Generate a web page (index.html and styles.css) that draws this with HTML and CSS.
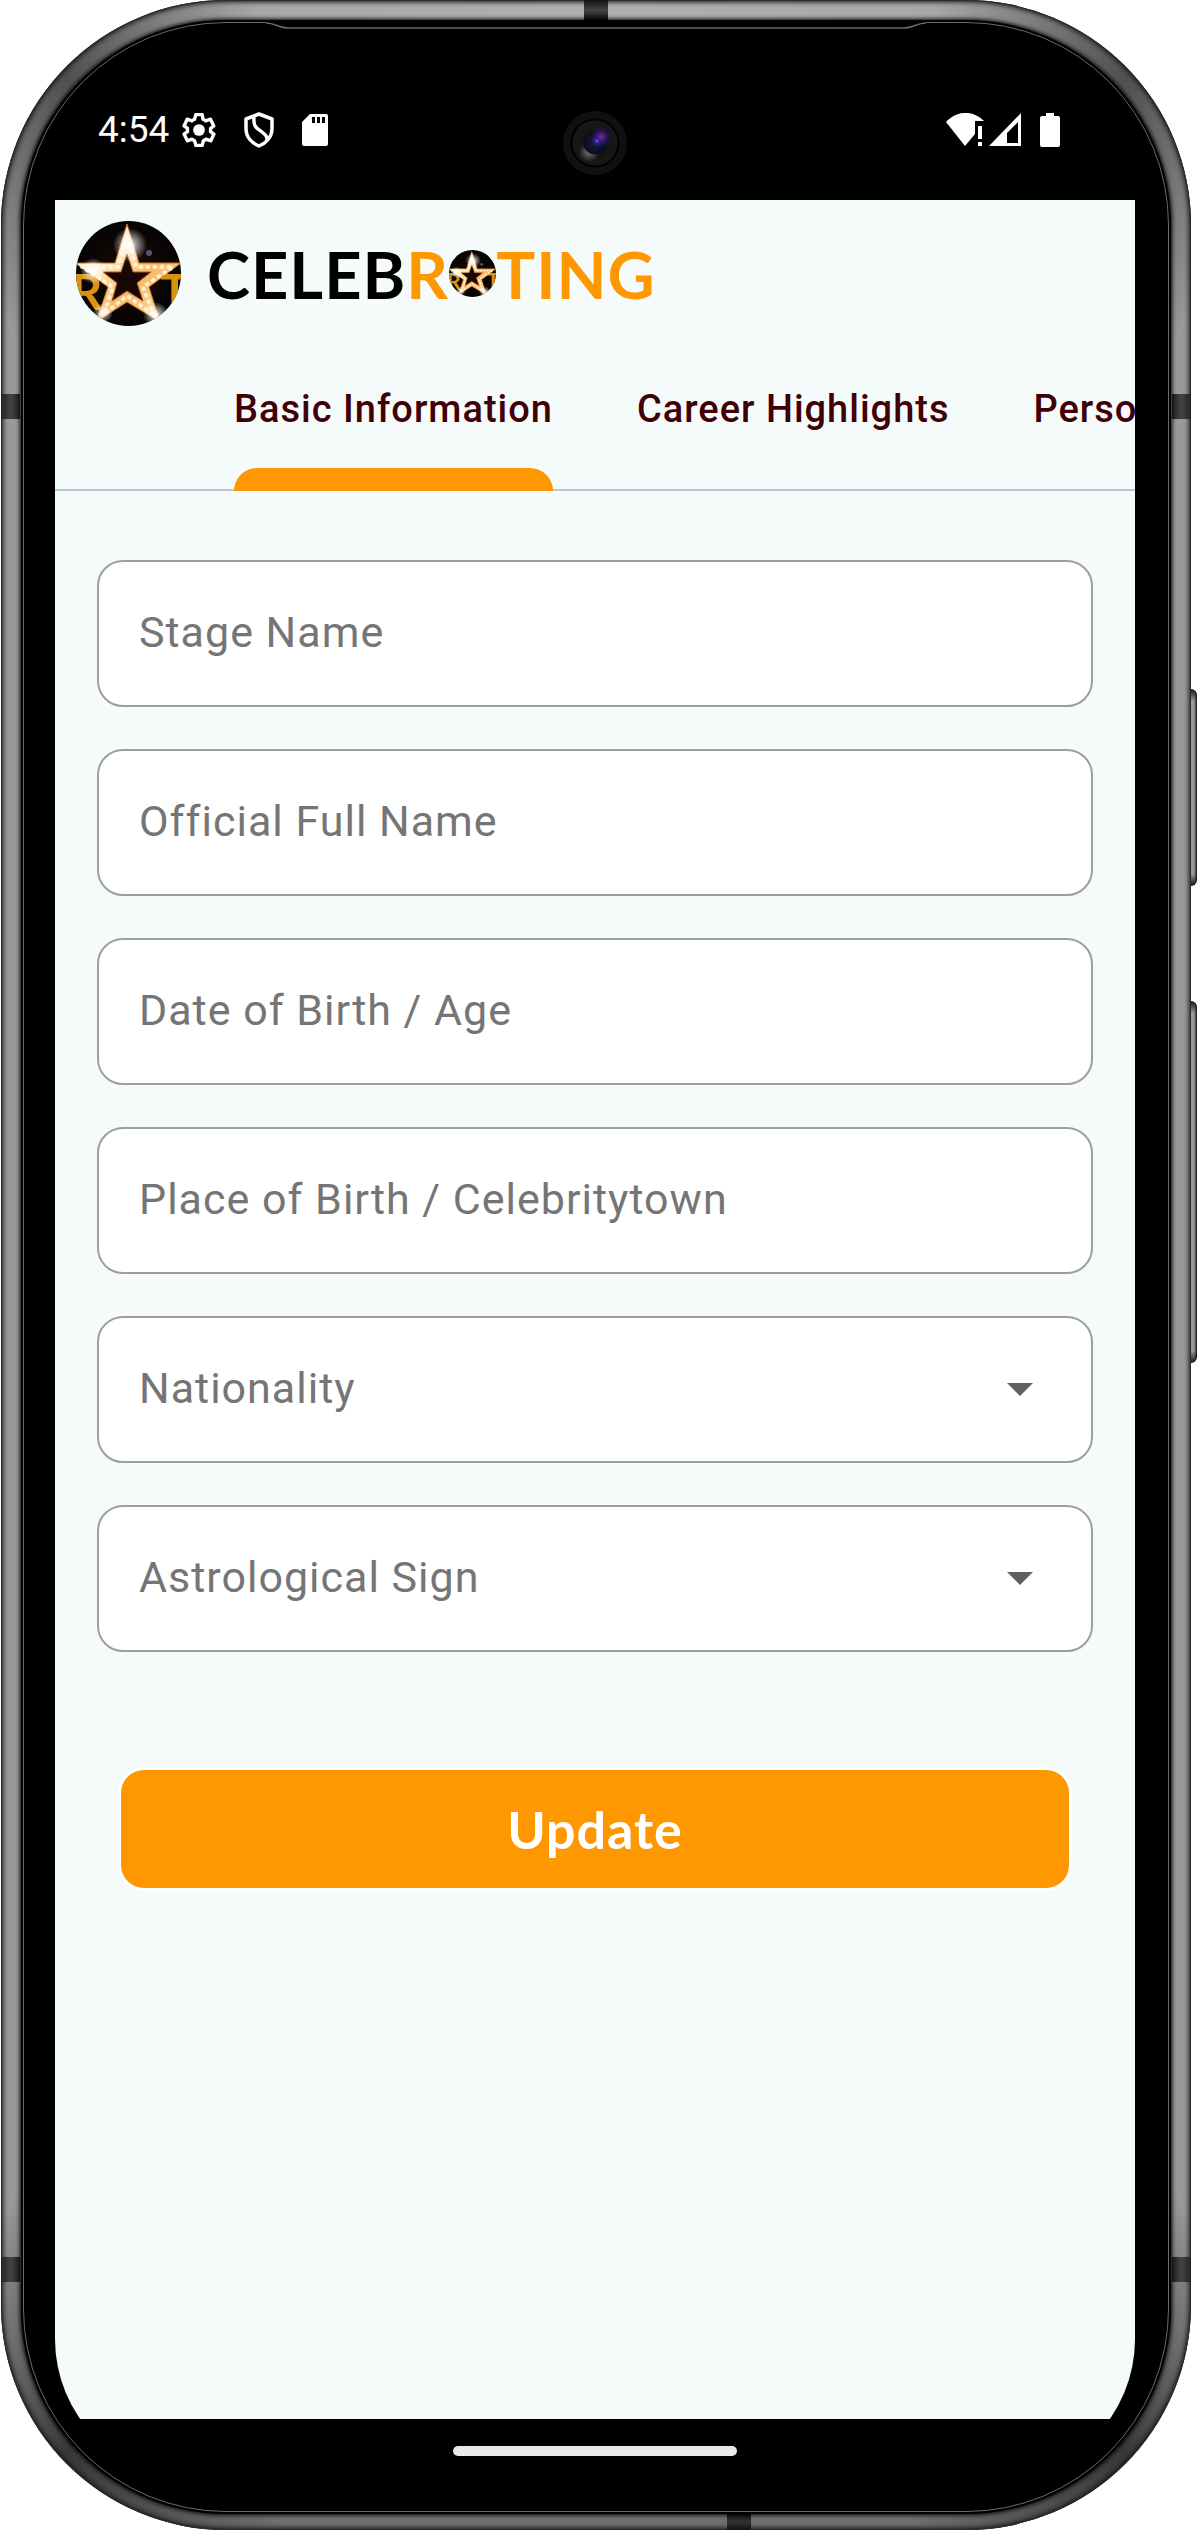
FILE: index.html
```html
<!DOCTYPE html>
<html lang="en">
<head>
<meta charset="utf-8">
<meta name="viewport" content="width=device-width, initial-scale=1">
<title>Celebrating – Basic Information</title>
<link rel="stylesheet" href="styles.css">
</head>
<body>
<svg class="defs" aria-hidden="true">
  <defs>
    <radialGradient id="glow"><stop offset="0" stop-color="#fff"/><stop offset=".35" stop-color="#fff" stop-opacity=".6"/><stop offset="1" stop-color="#fff" stop-opacity="0"/></radialGradient>
    <radialGradient id="night"><stop offset="0" stop-color="#1c0c04"/><stop offset="1" stop-color="#050302"/></radialGradient>
    <linearGradient id="gold" x1="0" y1="0" x2="1" y2="1"><stop offset="0" stop-color="#ffc070"/><stop offset=".3" stop-color="#fff0cc"/><stop offset=".6" stop-color="#fbb868"/><stop offset="1" stop-color="#ffe6b8"/></linearGradient>
    <clipPath id="disc"><circle cx="52.500" cy="52.500" r="52.500"/></clipPath>
    <symbol id="star" viewBox="0 0 105 105">
      <g clip-path="url(#disc)">
        <rect width="105" height="105" fill="url(#night)"/>
        <text class="star-letter" x="-5" y="89">R</text>
        <text class="star-letter" x="84" y="89">T</text>
        <path d="M51 3 63 42H105L73 66 84 101 51 81 20 101 32 66-1 42H39Z" fill="url(#gold)" stroke="#c86f24" stroke-width="1"/>
        <path d="M6 46H42L51 15 60 46H97L67 66 77 93 51 75 28 93 37 66Z" fill="none" stroke="#fffbe8" stroke-width="4" stroke-linecap="round" stroke-dasharray="1 6" opacity=".8"/>
        <path d="M51 33 57 51H75L61 62 67 80 51 70 36 80 41 62 27 51H45Z" fill="#180703" stroke="#a75820" stroke-width="1"/>
        <circle cx="54" cy="24" r="17" fill="url(#glow)"/>
        <circle cx="17" cy="50" r="13" fill="url(#glow)"/>
        <circle cx="80" cy="94" r="13" fill="url(#glow)"/>
        <circle cx="27" cy="92" r="10" fill="url(#glow)"/>
        <circle cx="73" cy="32" r="3" fill="#5d6d94" opacity=".8"/>
      </g>
    </symbol>
  </defs>
</svg>

<div class="phone">
  <span class="band band-top"></span>
  <span class="band band-bottom"></span>
  <span class="band side left high"></span>
  <span class="band side left low"></span>
  <span class="band side right high"></span>
  <span class="band side right low"></span>
  <span class="key power"></span>
  <span class="key volume"></span>

  <div class="bezel">
    <svg class="speaker" viewBox="0 0 660 10" aria-hidden="true">
      <path d="M0 0H660V3C650 3 648 8 638 8H22C12 8 10 3 0 3Z" fill="#000"/>
      <path d="M0 2C10 2 12 7 22 7H638C648 7 650 2 660 2" fill="none" stroke="#6a6a6a" stroke-width="1.500"/>
    </svg>

    <div class="screen">
      <div class="status-bar">
        <time class="clock">4:54</time>
        <div class="status-icons">
          <svg width="34" height="34" viewBox="1 1 22 22" aria-hidden="true"><path fill="none" stroke="#fff" stroke-width="2.200" stroke-linejoin="round" d="M19.430 12.980c.04-.32.07-.64.07-.98s-.03-.66-.07-.98l2.110-1.650-2.120-4.350-3.100 1.030c-.52-.4-1.080-.73-1.690-.98L14 2h-4l-.87 3.070c-.61.25-1.170.59-1.690.98L4.340 5.020 2.340 9.370l2.230 1.650c-.04.32-.07.65-.07.98s.03.66.07.98l-2.230 1.650 2.120 4.350 2.980-1.030c.52.4 1.080.73 1.690.98L10 22h4l.87-3.070c.61-.25 1.170-.59 1.690-.98l3.100 1.030 2-4.350z"/><circle cx="12" cy="12" r="3.800" fill="#fff"/></svg>
          <svg width="30" height="36" viewBox="0 0 30 36" aria-hidden="true"><path fill="none" stroke="#fff" stroke-width="3.500" stroke-linejoin="round" d="M15 2 28 7V17C28 25 22 31 15 34 8 31 2 25 2 17V7ZM10 4C9 16 13 16 18 20 23 24 23 25 23 29"/></svg>
          <svg width="26" height="32" viewBox="0 0 26 32" aria-hidden="true"><path fill="#fff" fill-rule="evenodd" d="M8 0H24Q26 0 26 2V30Q26 32 24 32H2Q0 32 0 30V8ZM10 3V9H13V3ZM15 3V9H18V3ZM20 3V9H23V3Z"/></svg>
        </div>
        <span class="camera"></span>
        <div class="signal-icons">
          <svg width="75" height="34" viewBox="0 0 75 34" aria-hidden="true"><path fill="#fff" d="M0 9C11-3 27-3 38 8H29V21L19 33Z"/><path fill="#fff" d="M32 13H36V26H32ZM32 29H36V33H32Z"/><path fill="#fff" fill-rule="evenodd" d="M75 0V33H43ZM72 9 61 20V30H72Z"/></svg>
          <svg width="20" height="34" viewBox="0 0 20 34" aria-hidden="true"><path fill="#fff" d="M6 0H14V3H18Q20 3 20 5V32Q20 34 18 34H2Q0 34 0 32V5Q0 3 2 3H6Z"/></svg>
        </div>
      </div>

      <main class="app">
        <header class="brand">
          <svg class="brand-mark" aria-hidden="true"><use href="#star"/></svg>
          <h1 class="brand-name">CELEB<span class="accent">R</span><svg class="brand-o" role="img" aria-label="A"><use href="#star"/></svg><span class="accent">TING</span></h1>
        </header>

        <nav class="tabs" aria-label="Profile sections">
          <a class="tab active" href="#basic" aria-current="page">Basic Information</a>
          <a class="tab" href="#career">Career Highlights</a>
          <a class="tab" href="#personal">Personal</a>
        </nav>

        <form class="form" id="basic">
          <div class="field"><input id="stage" type="text"><label for="stage">Stage Name</label></div>
          <div class="field"><input id="full" type="text"><label for="full">Official Full Name</label></div>
          <div class="field"><input id="birth" type="text"><label for="birth">Date of Birth / Age</label></div>
          <div class="field"><input id="place" type="text"><label for="place">Place of Birth / Celebritytown</label></div>
          <div class="field"><select id="nation"><option></option></select><label for="nation">Nationality</label><svg class="caret" viewBox="0 0 26 13" aria-hidden="true"><path d="M0 0H26L13 13Z" fill="#616161"/></svg></div>
          <div class="field"><select id="sign"><option></option></select><label for="sign">Astrological Sign</label><svg class="caret" viewBox="0 0 26 13" aria-hidden="true"><path d="M0 0H26L13 13Z" fill="#616161"/></svg></div>
          <button class="submit" type="button">Update</button>
        </form>
      </main>

      <div class="nav-bar"><span class="handle"></span></div>
    </div>
  </div>
</div>
</body>
</html>
```
FILE: styles.css
```css
* { box-sizing: border-box; }

body {
  margin: 0;
  background: #fff;
  font-family: Roboto, "Liberation Sans", sans-serif;
}

.defs { position: absolute; width: 0; height: 0; }

/* Device frame */
.phone {
  position: relative;
  display: flex;
  min-height: calc(100vh - 1px);
  margin: 0 7px 1px 1px;
  padding: 20px 20px 16px;
  border-radius: 225px;
  background: conic-gradient(#b0b0b0 0deg, #a8a8a8 15deg, #505050 24deg, #999 32deg, #999 148deg, #383838 156deg, #707070 166deg, #707070 194deg, #383838 204deg, #999 212deg, #999 328deg, #505050 336deg, #a8a8a8 345deg, #b0b0b0 360deg);
}

.phone::before {
  content: "";
  position: absolute;
  inset: 0;
  border-radius: inherit;
  box-shadow: inset 0 0 0 1px #2c2c2c, inset 0 0 5px 2px #111;
}

.bezel {
  position: relative;
  display: flex;
  flex: 1;
  min-width: 0;
  padding: 35px 36px 35px 34px;
  border-radius: 205px;
  background: #000;
  box-shadow: 0 0 4px 1px #000;
}

.bezel::before {
  content: "";
  position: absolute;
  inset: 2px;
  border: 1px solid #6a6a6a;
  border-radius: 203px;
}

.speaker {
  position: absolute;
  top: 1px;
  left: 50%;
  width: 660px;
  height: 10px;
  margin-left: -330px;
}

.band { position: absolute; background: linear-gradient(90deg, #222, #444, #222); }
.band-top { top: 0; left: 49%; width: 24px; height: 20px; background: linear-gradient(#111, #444, #111); }
.band-bottom { bottom: 0; left: 61%; width: 24px; height: 16px; background: linear-gradient(#111, #333, #111); }
.side { width: 19px; height: 25px; }
.left { left: 0; }
.right { right: 0; }
.high { top: 394px; }
.low { bottom: 248px; }

.key {
  position: absolute;
  right: -6px;
  width: 6px;
  border-radius: 0 6px 6px 0;
  background: linear-gradient(#111, transparent 12px, transparent calc(100% - 12px), #111), linear-gradient(90deg, #999 50%, #111);
}
.power { top: 689px; height: 197px; }
.volume { top: 1001px; height: 362px; }

/* Screen */
.screen {
  position: relative;
  display: flex;
  flex-direction: column;
  flex: 1;
  min-width: 0;
  border-radius: 140px;
  overflow: hidden;
}

.status-bar {
  display: flex;
  align-items: center;
  height: 145px;
  padding: 4px 75px 0 43px;
  gap: 13px;
  background: #000;
  color: #fff;
}

.clock { font-size: 37px; line-height: 44px; }
.status-icons { display: flex; align-items: center; gap: 28px; }
.signal-icons { display: flex; align-items: center; gap: 19px; margin-left: auto; }

.camera {
  position: absolute;
  top: 56px;
  left: 50%;
  width: 64px;
  height: 64px;
  margin-left: -32px;
  border-radius: 50%;
  background:
    radial-gradient(circle at 34px 30px, #6c5cff 0, #3622a0 2px, transparent 5px),
    radial-gradient(circle at 38px 26px, #6a3a78 0, #2a1060 6px, transparent 10px),
    radial-gradient(circle at 32px 32px, #10213c 0, #0c0c22 11px, transparent 12px),
    radial-gradient(circle at 26px 41px, #777 0, transparent 10px),
    radial-gradient(circle, #0a0a0a 0, #161616 16px, #181818 22px, #000 23px, #000 24px, #101010 25px);
}

.app {
  display: flex;
  flex-direction: column;
  flex: 1;
  background: #f5fbfb;
}

.brand {
  display: flex;
  align-items: center;
  gap: 26px;
  padding: 21px;
}

.brand-mark { width: 105px; height: 105px; }
.star-letter { fill: #d9930f; font: 700 49px Lato, sans-serif; }

.brand-name {
  display: flex;
  align-items: center;
  margin: 0;
  font: 700 65px/78px Lato, sans-serif;
  letter-spacing: 1px;
  color: #000;
}

.accent { color: #ff9800; }
.brand-o { width: 47px; height: 47px; margin-bottom: 1px; }

.tabs {
  display: flex;
  height: 144px;
  padding: 0 42px 0 179px;
  gap: 84px;
  overflow: hidden;
  box-shadow: inset 0 -2px #bcc5cb;
}

.tab {
  position: relative;
  flex: none;
  font-size: 38px;
  font-weight: 500;
  line-height: 124px;
  letter-spacing: 1px;
  color: #400005;
  text-decoration: none;
}

.tab.active::after {
  content: "";
  position: absolute;
  right: 0;
  bottom: 0;
  left: 0;
  height: 23px;
  border-radius: 23px 23px 0 0;
  background: #ff9800;
}

.form {
  display: flex;
  flex-direction: column;
  gap: 42px;
  padding: 69px 42px;
}

/* Control, label and caret share one grid cell; the label rests inside the box */
.field { display: grid; align-items: center; }
.field > * { grid-area: 1 / 1; }

.field input,
.field select {
  width: 100%;
  height: 147px;
  margin: 0;
  padding: 0 40px;
  border: 2px solid #9e9e9e;
  border-radius: 26px;
  outline: 0;
  appearance: none;
  background: #fff;
  font: 400 43px Roboto, "Liberation Sans", sans-serif;
  color: #222;
}

.field label {
  padding: 0 42px 4px;
  font-size: 43px;
  line-height: 52px;
  letter-spacing: 1px;
  color: #757575;
  pointer-events: none;
}

.caret {
  justify-self: end;
  width: 26px;
  height: 13px;
  margin-right: 60px;
  pointer-events: none;
}

.submit {
  height: 124px;
  margin: 73px 21px 0;
  border: 3px solid #fff;
  border-radius: 26px;
  background: #ff9800;
  font: 700 52px Lato, sans-serif;
  letter-spacing: 1px;
  color: #fff;
}

.nav-bar {
  display: flex;
  justify-content: center;
  align-items: center;
  height: 60px;
  padding-top: 4px;
  background: #000;
}

.handle { width: 284px; height: 10px; border-radius: 5px; background: #e9e9e9; }
```
